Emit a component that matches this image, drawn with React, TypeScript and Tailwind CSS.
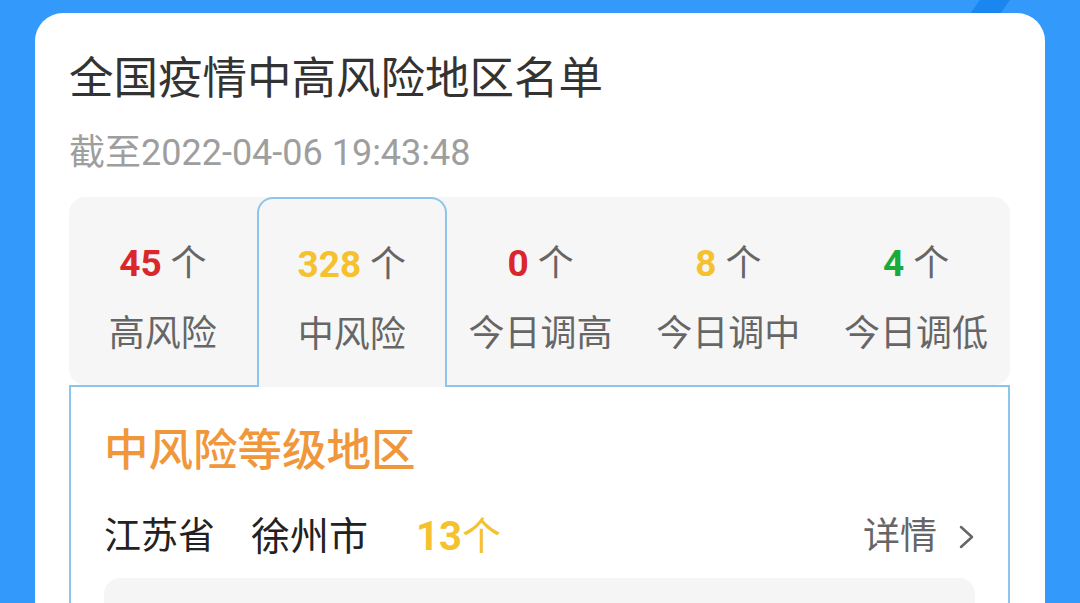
import React from "react";

const tabs = [
  { n: "45", color: "text-[#d9272c]", label: "高风险" },
  { n: "328", color: "text-[#f5c12c]", label: "中风险", active: true },
  { n: "0", color: "text-[#d9272c]", label: "今日调高" },
  { n: "8", color: "text-[#f5c12c]", label: "今日调中" },
  { n: "4", color: "text-[#18aa3b]", label: "今日调低" },
];

function TabBody({ t }: { t: (typeof tabs)[number] }) {
  return (
    <>
      <div className="text-[36px] leading-[44px]">
        <span className={`font-bold text-[37px] ${t.color}`}>{t.n}</span>
        <span className="text-[#666666]"> 个</span>
      </div>
      <div className="text-[36px] leading-[44px] text-[#666666]">{t.label}</div>
    </>
  );
}

export default function App() {
  return (
    <div
      className="relative w-[1080px] h-[603px] overflow-hidden bg-[#3399fb]"
      style={{ fontFamily: 'Roboto, "Noto Sans CJK SC", sans-serif' }}
    >
      <div className="absolute left-[975px] top-[-4px] w-[30px] h-[22px] bg-[#1a86f0] -skew-x-[35deg]" />
      <div className="relative mt-[13px] ml-[35px] w-[1010px] h-[620px] bg-white rounded-[28px] pl-[34px] pr-[35px] pt-[40px]">
        <div className="text-[44.5px] leading-[52px] text-[#333333]">全国疫情中高风险地区名单</div>
        <div className="mt-[27px] text-[36px] leading-[42px] text-[#9e9e9e]">截至2022-04-06 19:43:48</div>

        <div className="mt-[23px] w-[941px]">
          <div className="flex h-[188px] bg-[#f6f6f6] rounded-[16px]">
            {tabs.map((t) =>
              t.active ? (
                <div
                  key={t.label}
                  className="relative z-10 w-[190px] h-[190px] flex flex-col items-center pt-[44px] gap-[26px] border-2 border-b-0 border-[#8cc4ea] rounded-t-[16px] bg-[#f6f6f6]"
                >
                  <TabBody t={t} />
                </div>
              ) : (
                <div key={t.label} className="flex-1 flex flex-col items-center pt-[45px] gap-[26px]">
                  <TabBody t={t} />
                </div>
              )
            )}
          </div>
          <div className="border-2 border-[#8cc4ea] bg-white h-[260px] px-[33px] pt-[38px]">
            <div className="text-[44.5px] leading-[52px] font-medium text-[#f0973c]">中风险等级地区</div>
            <div className="mt-[36px] flex items-center justify-between h-[48px]">
              <div className="flex items-center leading-[48px] text-[#222222]">
                <span className="text-[37px]">江苏省</span>
                <span className="ml-[36px] text-[39px]">徐州市</span>
                <span className="ml-[48px] text-[40px] font-bold text-[#f5c12c]">13</span>
                <span className="text-[39px] text-[#f5c12c]">个</span>
              </div>
              <div className="flex items-center text-[37px] leading-[48px] text-[#666666]">
                <span>详情</span>
                <svg className="ml-[20px]" width="18" height="28" viewBox="0 0 18 28">
                  <polyline points="4,4 15,14 4,24" fill="none" stroke="#666666" strokeWidth="2.5" strokeLinecap="round" strokeLinejoin="round" />
                </svg>
              </div>
            </div>
            <div className="mt-[17px] h-[100px] bg-[#f5f5f5] rounded-t-[16px]" />
          </div>
        </div>
      </div>
    </div>
  );
}
